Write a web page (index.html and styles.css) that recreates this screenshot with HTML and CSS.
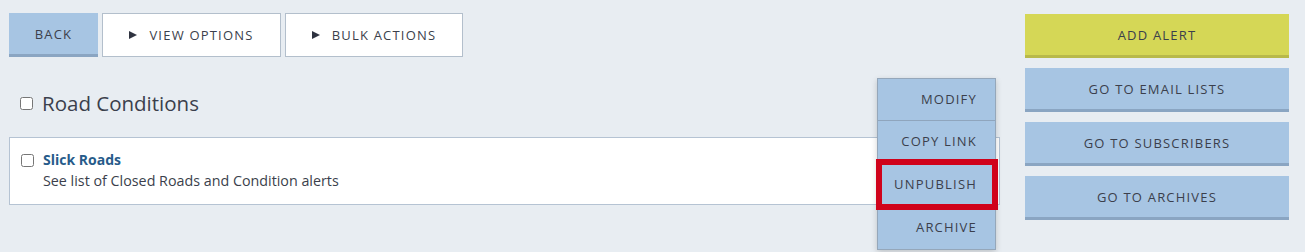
FILE: index.html
```html
<!DOCTYPE html>
<html>
<head>
<meta charset="utf-8">
<link rel="stylesheet" href="styles.css">
</head>
<body>
<div class="page">
  <div class="main">
    <div class="toolbar">
      <button class="btn btn-blue back">BACK</button>
      <button class="btn btn-white opt"><span class="tri"></span>VIEW OPTIONS</button>
      <button class="btn btn-white bulk"><span class="tri"></span>BULK ACTIONS</button>
    </div>
    <div class="group-head">
      <input type="checkbox" class="cb">
      <span class="group-title">Road Conditions</span>
    </div>
    <div class="card">
      <input type="checkbox" class="cb">
      <div class="card-body">
        <div class="card-title">Slick Roads</div>
        <div class="card-desc">See list of Closed Roads and Condition alerts</div>
      </div>
    </div>
    <div class="menu">
      <div class="menu-item">MODIFY</div>
      <div class="menu-item">COPY LINK</div>
      <div class="menu-item">UNPUBLISH</div>
      <div class="menu-item">ARCHIVE</div>
      <div class="highlight"></div>
    </div>
  </div>
  <div class="side">
    <button class="btn btn-yellow">ADD ALERT</button>
    <button class="btn btn-blue">GO TO EMAIL LISTS</button>
    <button class="btn btn-blue">GO TO SUBSCRIBERS</button>
    <button class="btn btn-blue">GO TO ARCHIVES</button>
  </div>
</div>
</body>
</html>
```
FILE: styles.css
```css
html, body {
  margin: 0;
  padding: 0;
  background: #e8edf2;
  font-family: "Open Sans", "Noto Sans", sans-serif;
  color: #3b3f4c;
}
.page {
  display: flex;
  padding: 13px 16px 0 9px;
  gap: 25px;
  min-height: 252px;
  box-sizing: border-box;
}
.main {
  flex: 1;
  position: relative;
}
.toolbar {
  display: flex;
  gap: 4px;
}
.btn {
  font-family: "Open Sans", "Noto Sans", sans-serif;
  font-size: 13px;
  letter-spacing: 1.2px;
  color: #3b3f4c;
  height: 44px;
  border: 0;
  padding: 0;
  margin: 0;
  cursor: pointer;
  display: flex;
  align-items: center;
  justify-content: center;
}
.btn-blue {
  background: #a7c5e3;
  border-bottom: 3px solid #8aa5c2;
}
.btn-yellow {
  background: #d5d756;
  border-bottom: 3px solid #b8b94a;
}
.btn-white {
  background: #ffffff;
  border: 1px solid #b3bfcc;
}
.back { width: 89px; }
.opt { width: 179px; }
.bulk { width: 178px; }
.tri {
  width: 0;
  height: 0;
  border-left: 8px solid #2f3340;
  border-top: 4.5px solid transparent;
  border-bottom: 4.5px solid transparent;
  margin-right: 12px;
}
.group-head {
  display: flex;
  align-items: center;
  height: 34px;
  margin-top: 29px;
  padding-left: 10px;
}
.cb {
  width: 13px;
  height: 13px;
  margin: 0 9px 0 1px;
}
.group-title {
  font-size: 20.5px;
  color: #3b3f4c;
}
.card {
  margin-top: 17px;
  background: #fff;
  border: 1px solid #b5c3d3;
  box-sizing: border-box;
  height: 68px;
  display: flex;
  align-items: flex-start;
  padding: 13px 10px 0 10px;
}
.card .cb {
  margin-top: 3px;
}
.card-title {
  font-size: 14px;
  font-weight: 700;
  color: #275b8a;
  line-height: 18px;
}
.card-desc {
  font-size: 14.3px;
  color: #3b3f4c;
  line-height: 20px;
  margin-top: 2px;
}
.menu {
  position: absolute;
  left: 868px;
  top: 65px;
  width: 117px;
  background: #a7c5e3;
  border: 1px solid #95a7ba;
  box-shadow: 0 2px 6px rgba(0,0,0,0.18);
}
.menu-item {
  height: 43px;
  box-sizing: border-box;
  padding-bottom: 2px;
  display: flex;
  align-items: center;
  justify-content: flex-end;
  padding-right: 18px;
  font-size: 13px;
  letter-spacing: 1.2px;
  color: #3b3f4c;
  border-top: 1px solid #8fa5bd;
}
.menu-item:first-child {
  border-top: 0;
  height: 41px;
}
.highlight {
  position: absolute;
  left: -2px;
  top: 80px;
  width: 110px;
  height: 39px;
  border: 6px solid #d0021b;
}
.side {
  width: 264px;
  display: flex;
  flex-direction: column;
  gap: 10px;
  padding-top: 1px;
}
.side .btn {
  width: 264px;
  height: 44px;
}
```
